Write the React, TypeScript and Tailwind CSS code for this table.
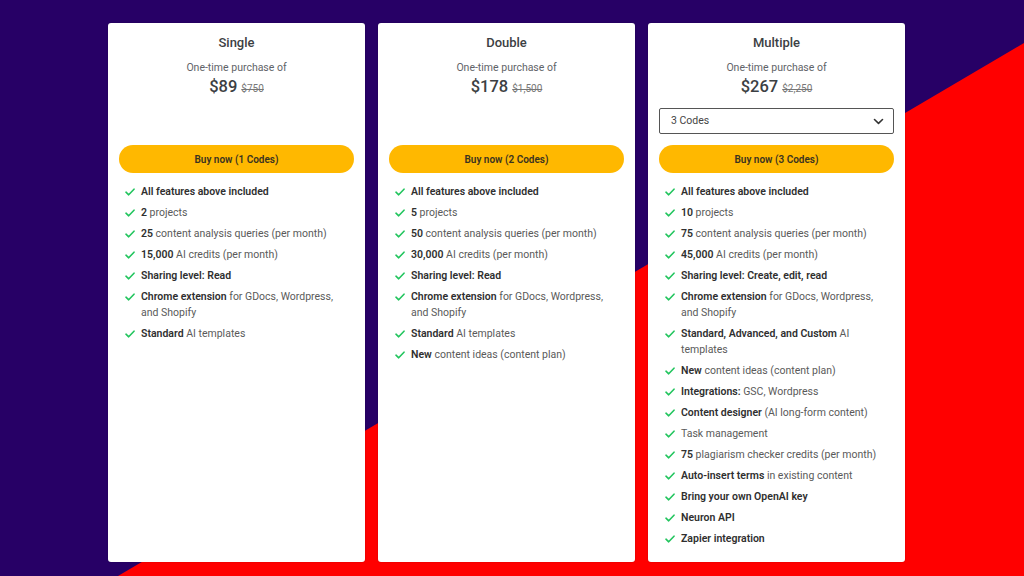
import React from "react";

type Feat = { b?: string; r?: string };

const Check = () => (
  <svg width="10" height="8" viewBox="0 0 10 8" className="shrink-0 mt-[4px]">
    <path d="M1 4.2 L3.7 6.8 L9 1.2" fill="none" stroke="#22c55e" strokeWidth="1.6" strokeLinecap="round" strokeLinejoin="round" />
  </svg>
);

const Chevron = () => (
  <svg width="11" height="7" viewBox="0 0 11 7">
    <path d="M1.5 1.5 L5.5 5.3 L9.5 1.5" fill="none" stroke="#333" strokeWidth="1.6" strokeLinecap="round" strokeLinejoin="round" />
  </svg>
);

const plans: { name: string; price: string; old: string; codes: number; dropdown?: boolean; feats: Feat[] }[] = [
  {
    name: "Single",
    price: "$89",
    old: "$750",
    codes: 1,
    feats: [
      { b: "All features above included" },
      { b: "2", r: " projects" },
      { b: "25", r: " content analysis queries (per month)" },
      { b: "15,000", r: " AI credits (per month)" },
      { b: "Sharing level: Read" },
      { b: "Chrome extension", r: " for GDocs, Wordpress, and Shopify" },
      { b: "Standard", r: " AI templates" },
    ],
  },
  {
    name: "Double",
    price: "$178",
    old: "$1,500",
    codes: 2,
    feats: [
      { b: "All features above included" },
      { b: "5", r: " projects" },
      { b: "50", r: " content analysis queries (per month)" },
      { b: "30,000", r: " AI credits (per month)" },
      { b: "Sharing level: Read" },
      { b: "Chrome extension", r: " for GDocs, Wordpress, and Shopify" },
      { b: "Standard", r: " AI templates" },
      { b: "New", r: " content ideas (content plan)" },
    ],
  },
  {
    name: "Multiple",
    price: "$267",
    old: "$2,250",
    codes: 3,
    dropdown: true,
    feats: [
      { b: "All features above included" },
      { b: "10", r: " projects" },
      { b: "75", r: " content analysis queries (per month)" },
      { b: "45,000", r: " AI credits (per month)" },
      { b: "Sharing level: Create, edit, read" },
      { b: "Chrome extension", r: " for GDocs, Wordpress, and Shopify" },
      { b: "Standard, Advanced, and Custom", r: " AI templates" },
      { b: "New", r: " content ideas (content plan)" },
      { b: "Integrations:", r: " GSC, Wordpress" },
      { b: "Content designer", r: " (AI long-form content)" },
      { r: "Task management" },
      { b: "75", r: " plagiarism checker credits (per month)" },
      { b: "Auto-insert terms", r: " in existing content" },
      { b: "Bring your own OpenAI key" },
      { b: "Neuron API" },
      { b: "Zapier integration" },
    ],
  },
];

export default function App() {
  return (
    <div
      className="relative w-[1024px] h-[576px] overflow-hidden bg-[#270066]"
      style={{ fontFamily: "Roboto, 'Liberation Sans', sans-serif" }}
    >
      <div className="absolute inset-0 bg-[#ff0000] [clip-path:polygon(118px_100%,100%_43px,100%_100%)]" />
      <div className="relative flex gap-[13px] pl-[108px] pt-[23px]">
        {plans.map((p) => (
          <div
            key={p.name}
            className="w-[257px] h-[539px] bg-white rounded-[3px] shadow-[0_0_2px_rgba(0,0,0,0.2)] flex flex-col px-[11px] pt-[11px]"
          >
            <div className="shrink-0 text-center text-[13px] leading-[18px] font-medium text-[#3c4043]">{p.name}</div>
            <div className="shrink-0 text-center text-[10.5px] leading-[14px] text-[#5f6368] mt-[9px]">One-time purchase of</div>
            <div className="shrink-0 flex items-baseline justify-center gap-[4px] mt-[1px]">
              <span className="text-[16.5px] leading-[22px] font-medium text-[#3c4043]">{p.price}</span>
              <span className="text-[10px] leading-[14px] text-[#777] line-through">{p.old}</span>
            </div>
            {p.dropdown ? (
              <div className="shrink-0 mt-[10px] h-[26px] border border-[#555] rounded-[2px] flex items-center justify-between pl-[11px] pr-[9px] text-[10.5px] text-[#444]">
                <span>3 Codes</span>
                <Chevron />
              </div>
            ) : (
              <div className="shrink-0 mt-[10px] h-[26px]" />
            )}
            <div className="shrink-0 mt-[11px] h-[28px] rounded-full bg-[#ffb800] flex items-center justify-center text-[10px] font-semibold text-[#3a3320]">
              Buy now ({p.codes} Codes)
            </div>
            <ul className="shrink-0 mt-[11px] flex flex-col gap-[5px] pl-[6px] pr-[8px]">
              {p.feats.map((f, i) => (
                <li key={i} className="flex gap-[6px] text-[10.5px] leading-[16px]">
                  <Check />
                  <p className="text-[#5a5a5a]">
                    {f.b && <b className="font-semibold text-[#2f2f2f]">{f.b}</b>}
                    {f.r}
                  </p>
                </li>
              ))}
            </ul>
          </div>
        ))}
      </div>
    </div>
  );
}
